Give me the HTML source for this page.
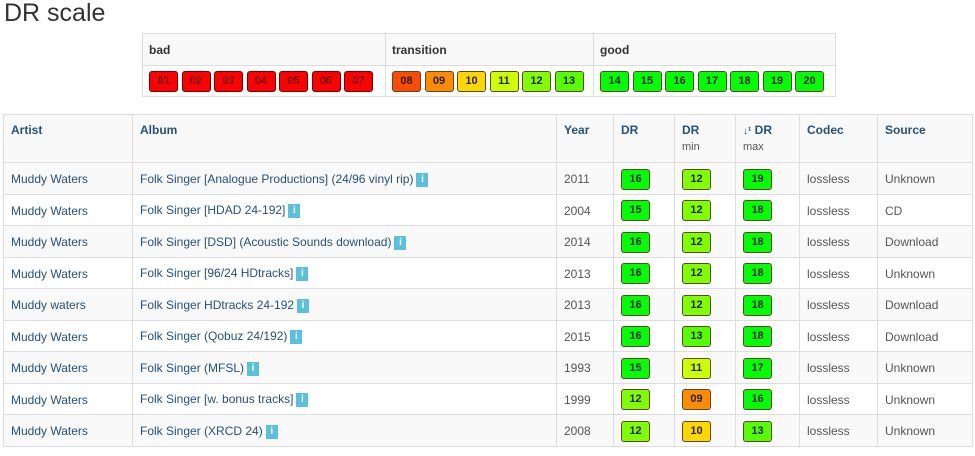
<!DOCTYPE html>
<html><head><meta charset="utf-8"><style>
*{box-sizing:border-box;margin:0;padding:0}
body{width:975px;height:456px;background:#fff;font-family:"Liberation Sans",Arial,sans-serif;color:#333;position:relative;overflow:hidden}
h1{position:absolute;left:4px;top:-2px;font-size:25px;font-weight:normal;color:#333;line-height:30px}
.b{display:inline-block;width:29px;height:21px;border:1px solid #5a4a2a;border-radius:3px;font-size:11px;font-weight:bold;text-align:center;line-height:19px;color:#222;vertical-align:middle}
.r{background:#f00;color:#600;border-color:#700}
.c8{background:#ff4a00}.c9{background:#ff8c00}.c10{background:#ffd700}.c11{background:#ccff00}.c12{background:#80ff00}.c13{background:#55ff00}.g{background:#00ff00}
table{border-collapse:collapse;position:absolute}
#sc{left:142px;top:33px;width:694px}
#sc td{border:1px solid #ddd;padding:0 0 0 6px}
#sc tr.h td{height:32px;background:#f9f9f9;font-size:12px;font-weight:bold;color:#333}
#sc tr.v td{height:31px}
#sc .b{margin-right:3.5px}
#mt{left:3px;top:114px;width:970px;font-size:12px}
#mt td,#mt th{border:1px solid #ddd;padding:0 7px;text-align:left;vertical-align:middle}
#mt th{height:48px;vertical-align:top;padding-top:8px;color:#23527c;font-weight:bold;background:#f9f9f9}
#mt th small{display:block;font-weight:normal;color:#555;font-size:11px;margin-top:4px}
#mt td{height:31.5px;color:#555;padding-top:2px}
#mt tr:nth-child(even) td{background:#f9f9f9}
a{color:#23527c;text-decoration:none}
.i{display:inline-block;width:12px;height:14px;background:#5bc0de;color:#fff;font-size:10px;font-weight:bold;text-align:center;line-height:14px;vertical-align:middle;margin-left:3px}
</style></head><body>
<h1>DR scale</h1>
<table id="sc"><tr class="h"><td style="width:243px">bad</td><td style="width:208px">transition</td><td>good</td></tr>
<tr class="v"><td><span class="b r">01</span><span class="b r">02</span><span class="b r">03</span><span class="b r">04</span><span class="b r">05</span><span class="b r">06</span><span class="b r">07</span></td>
<td><span class="b c8">08</span><span class="b c9">09</span><span class="b c10">10</span><span class="b c11">11</span><span class="b c12">12</span><span class="b c13">13</span></td>
<td><span class="b g">14</span><span class="b g">15</span><span class="b g">16</span><span class="b g">17</span><span class="b g">18</span><span class="b g">19</span><span class="b g">20</span></td></tr></table>
<table id="mt">
<tr><th style="width:129px">Artist</th><th style="width:424px">Album</th><th style="width:57px">Year</th><th style="width:61px">DR</th><th style="width:61px">DR<small>min</small></th><th style="width:64px"><span style="font-size:10px">&#8595;&#185;</span> DR<small>max</small></th><th style="width:78px">Codec</th><th>Source</th></tr>
<tr><td><a>Muddy Waters</a></td><td><a>Folk Singer [Analogue Productions] (24/96 vinyl rip)</a><span class="i">i</span></td><td>2011</td><td><span class="b g">16</span></td><td><span class="b c12">12</span></td><td><span class="b g">19</span></td><td>lossless</td><td>Unknown</td></tr>
<tr><td><a>Muddy Waters</a></td><td><a>Folk Singer [HDAD 24-192]</a><span class="i">i</span></td><td>2004</td><td><span class="b g">15</span></td><td><span class="b c12">12</span></td><td><span class="b g">18</span></td><td>lossless</td><td>CD</td></tr>
<tr><td><a>Muddy Waters</a></td><td><a>Folk Singer [DSD] (Acoustic Sounds download)</a><span class="i">i</span></td><td>2014</td><td><span class="b g">16</span></td><td><span class="b c12">12</span></td><td><span class="b g">18</span></td><td>lossless</td><td>Download</td></tr>
<tr><td><a>Muddy Waters</a></td><td><a>Folk Singer [96/24 HDtracks]</a><span class="i">i</span></td><td>2013</td><td><span class="b g">16</span></td><td><span class="b c12">12</span></td><td><span class="b g">18</span></td><td>lossless</td><td>Unknown</td></tr>
<tr><td><a>Muddy waters</a></td><td><a>Folk Singer HDtracks 24-192</a><span class="i">i</span></td><td>2013</td><td><span class="b g">16</span></td><td><span class="b c12">12</span></td><td><span class="b g">18</span></td><td>lossless</td><td>Download</td></tr>
<tr><td><a>Muddy Waters</a></td><td><a>Folk Singer (Qobuz 24/192)</a><span class="i">i</span></td><td>2015</td><td><span class="b g">16</span></td><td><span class="b c13">13</span></td><td><span class="b g">18</span></td><td>lossless</td><td>Download</td></tr>
<tr><td><a>Muddy Waters</a></td><td><a>Folk Singer (MFSL)</a><span class="i">i</span></td><td>1993</td><td><span class="b g">15</span></td><td><span class="b c11">11</span></td><td><span class="b g">17</span></td><td>lossless</td><td>Unknown</td></tr>
<tr><td><a>Muddy Waters</a></td><td><a>Folk Singer [w. bonus tracks]</a><span class="i">i</span></td><td>1999</td><td><span class="b c12">12</span></td><td><span class="b c9">09</span></td><td><span class="b g">16</span></td><td>lossless</td><td>Unknown</td></tr>
<tr><td><a>Muddy Waters</a></td><td><a>Folk Singer (XRCD 24)</a><span class="i">i</span></td><td>2008</td><td><span class="b c12">12</span></td><td><span class="b c10">10</span></td><td><span class="b c13">13</span></td><td>lossless</td><td>Unknown</td></tr>
</table>
</body></html>
